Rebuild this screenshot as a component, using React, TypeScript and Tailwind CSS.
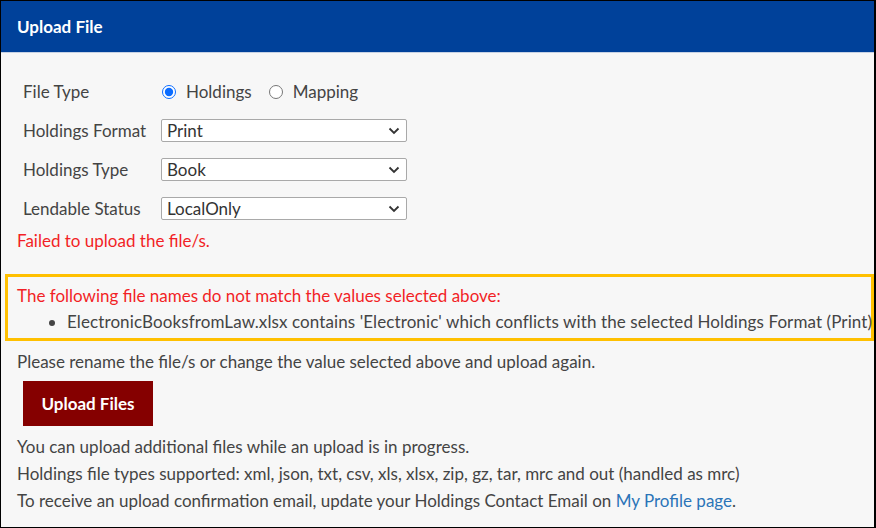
import React, { useState } from 'react';

const fileTypes = ['Holdings', 'Mapping'];

const selectFields = [
    { label: 'Holdings Format', value: 'Print', options: ['Print', 'Electronic'] },
    { label: 'Holdings Type', value: 'Book', options: ['Book', 'Journal', 'Other'] },
    { label: 'Lendable Status', value: 'LocalOnly', options: ['LocalOnly', 'Lendable', 'NotLendable'] },
];

const Chevron: React.FC = () => (
    <svg width="12" height="8" viewBox="0 0 12 8" className="pointer-events-none absolute right-[7px] top-1/2 -translate-y-1/2">
        <path d="M1.5 1.5 L6 6 L10.5 1.5" fill="none" stroke="#333" strokeWidth="1.8" />
    </svg>
);

const App: React.FC = () => {
    const [fileType, setFileType] = useState('Holdings');
    const [values, setValues] = useState<Record<string, string>>(
        Object.fromEntries(selectFields.map(f => [f.label, f.value]))
    );

    return (
        <div className="w-[876px] h-[528px] bg-[#f7f7f7] border border-black border-r-2 overflow-hidden text-[17px] text-[#444] font-['Lato','Open_Sans',sans-serif]">
            {/* Panel header */}
            <div className="h-[52px] bg-[#00419a] border-b border-[#c7d2e4] flex items-center px-[16px]">
                <h1 className="text-white font-bold text-[17px]">Upload File</h1>
            </div>

            <div className="px-[16px] pt-[19px]">
                {/* Upload options */}
                <div className="pl-[6px]">
                    <div className="h-[39px] flex items-center">
                        <span className="w-[138px]">File Type</span>
                        <div className="flex items-center">
                            {fileTypes.map(t => (
                                <label key={t} className="flex items-center mr-[16px]">
                                    <input
                                        type="radio"
                                        name="fileType"
                                        checked={fileType === t}
                                        onChange={() => setFileType(t)}
                                        className="w-[14px] h-[14px] mx-[1px] accent-[#0b6cff]"
                                    />
                                    <span className="ml-[9px]">{t}</span>
                                </label>
                            ))}
                        </div>
                    </div>

                    {selectFields.map(f => (
                        <div key={f.label} className="h-[39px] flex items-center">
                            <span className="w-[138px]">{f.label}</span>
                            <div className="relative w-[246px]">
                                <select
                                    value={values[f.label]}
                                    onChange={e => setValues({ ...values, [f.label]: e.target.value })}
                                    className="appearance-none w-full h-[23px] bg-white border border-[#a9a9a9] rounded-[2px] pl-[5px] leading-[20px] text-[17px] text-[#333] outline-none"
                                >
                                    {f.options.map(o => <option key={o}>{o}</option>)}
                                </select>
                                <Chevron />
                            </div>
                        </div>
                    ))}
                </div>

                <p className="text-[#f21f26] leading-[26px]">Failed to upload the file/s.</p>

                {/* Mismatch warning */}
                <div className="-ml-[12px] -mr-[16px] mt-[20px] border-[3px] border-[#ffc000] pl-[9px] pt-[6px] pb-[3px] whitespace-nowrap">
                    <p className="text-[#f21f26] leading-[26px]">The following file names do not match the values selected above:</p>
                    <ul className="list-disc pl-[50px] leading-[26px] text-[#444] marker:text-[#444]">
                        <li className="tracking-[0.1px]">ElectronicBooksfromLaw.xlsx contains 'Electronic' which conflicts with the selected Holdings Format (Print)</li>
                    </ul>
                </div>

                <p className="mt-[8px] leading-[26px]">Please rename the file/s or change the value selected above and upload again.</p>

                <button className="ml-[6px] mt-[6px] w-[130px] h-[45px] bg-[#850000] text-white font-bold text-[17px]">
                    Upload Files
                </button>

                <div className="mt-[7px] leading-[27px]">
                    <p>You can upload additional files while an upload is in progress.</p>
                    <p>Holdings file types supported: xml, json, txt, csv, xls, xlsx, zip, gz, tar, mrc and out (handled as mrc)</p>
                    <p>
                        To receive an upload confirmation email, update your Holdings Contact Email on{' '}
                        <a href="#" className="text-[#2b74b8]">My Profile page</a>.
                    </p>
                </div>
            </div>
        </div>
    );
};

export default App;
